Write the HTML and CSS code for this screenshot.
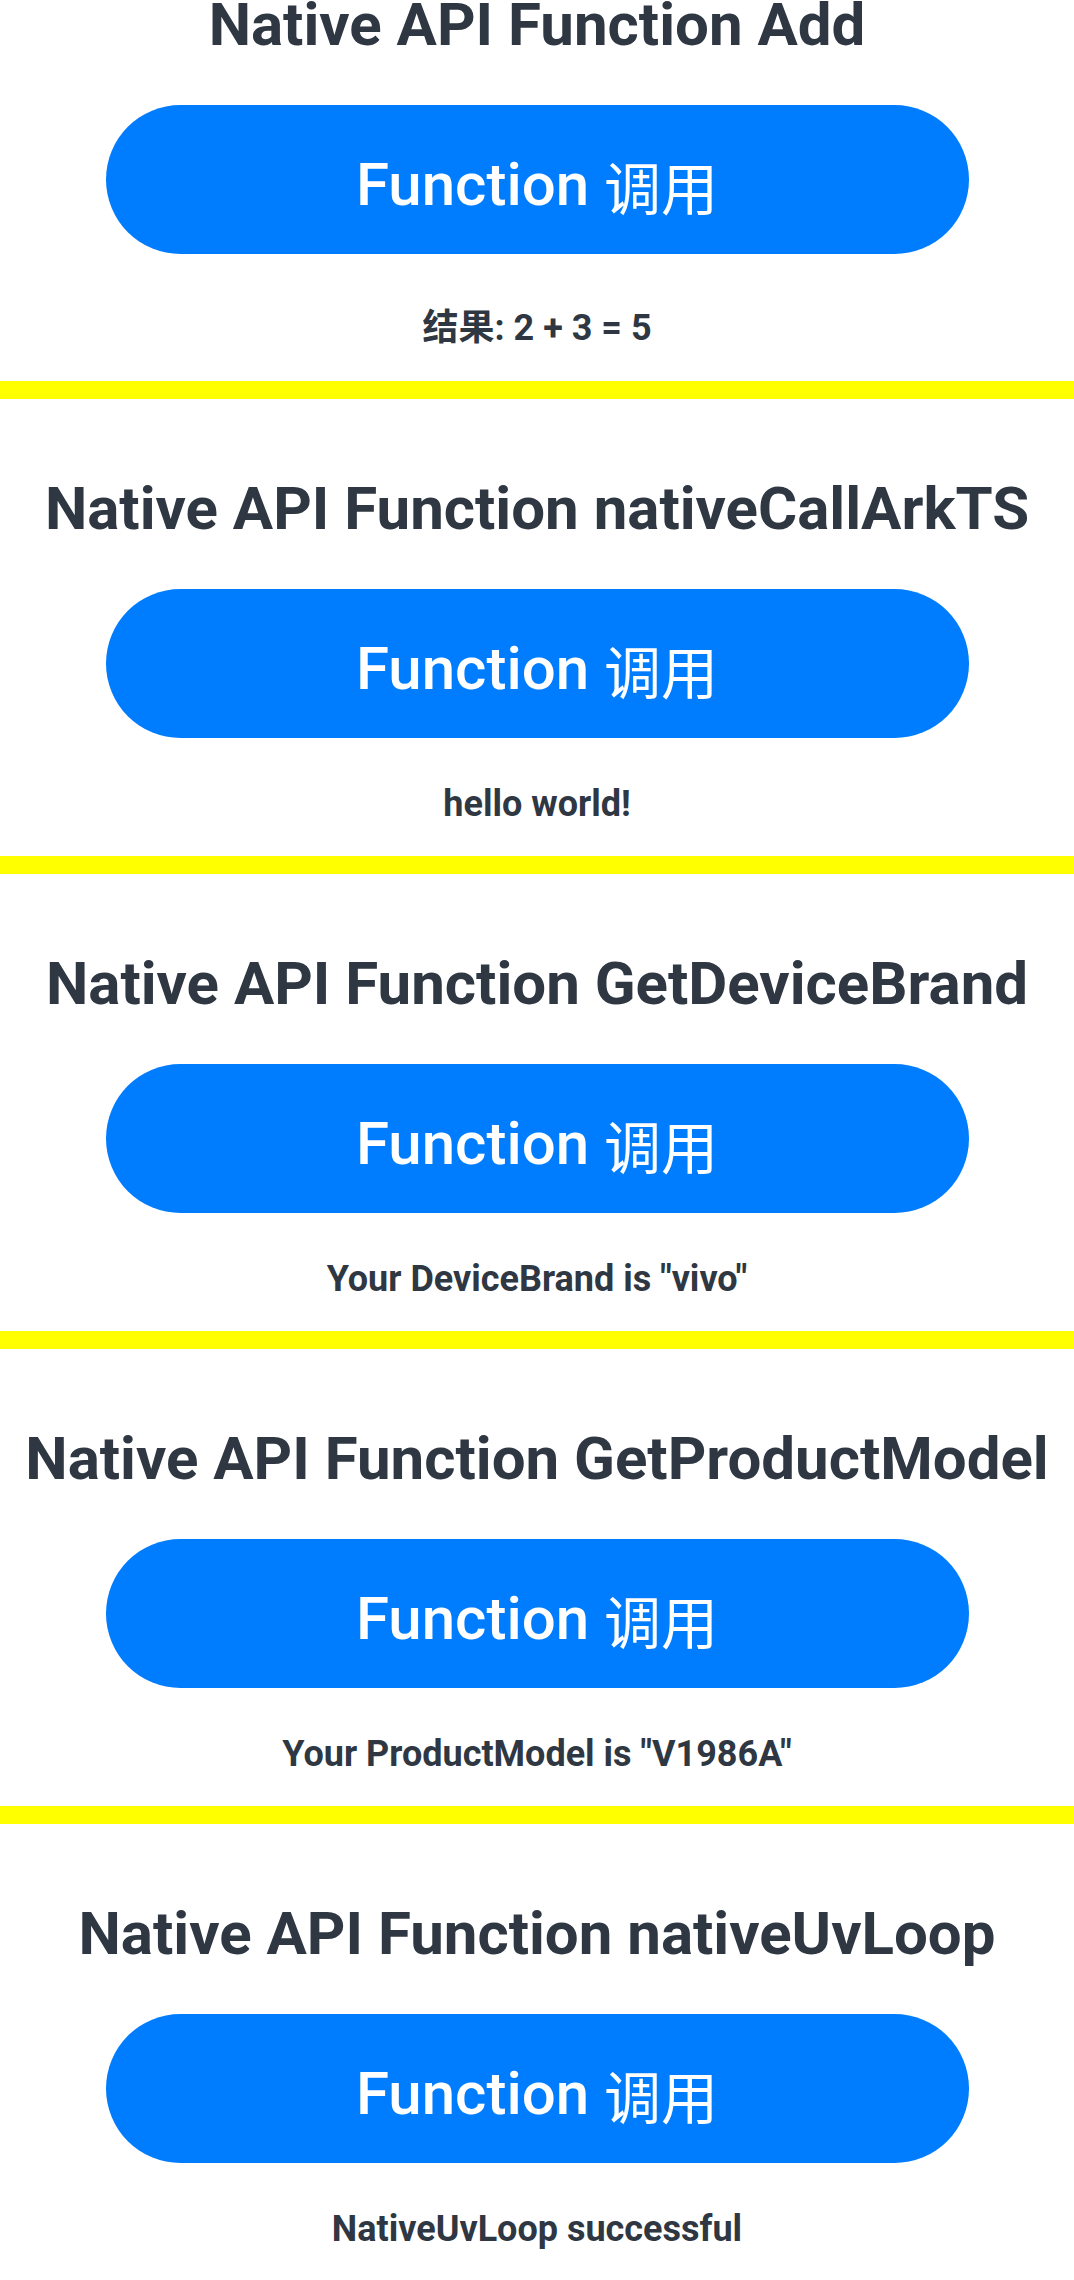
FILE: index.html
```html
<!DOCTYPE html>
<html lang="zh">
<head>
<meta charset="utf-8">
<title>Native API</title>
<link rel="stylesheet" href="styles.css">
</head>
<body>
<main class="list">
  <section class="item">
    <h2 class="title">Native API Function Add</h2>
    <button class="btn">Function <span class="btn-cjk">调用</span></button>
    <p class="result result-cjk">结果: 2 + 3 = 5</p>
  </section>
  <div class="divider"></div>
  <section class="item">
    <h2 class="title">Native API Function nativeCallArkTS</h2>
    <button class="btn">Function <span class="btn-cjk">调用</span></button>
    <p class="result">hello world!</p>
  </section>
  <div class="divider"></div>
  <section class="item">
    <h2 class="title">Native API Function GetDeviceBrand</h2>
    <button class="btn">Function <span class="btn-cjk">调用</span></button>
    <p class="result">Your DeviceBrand is "vivo"</p>
  </section>
  <div class="divider"></div>
  <section class="item">
    <h2 class="title">Native API Function GetProductModel</h2>
    <button class="btn">Function <span class="btn-cjk">调用</span></button>
    <p class="result">Your ProductModel is "V1986A"</p>
  </section>
  <div class="divider"></div>
  <section class="item">
    <h2 class="title">Native API Function nativeUvLoop</h2>
    <button class="btn">Function <span class="btn-cjk">调用</span></button>
    <p class="result">NativeUvLoop successful</p>
  </section>
</main>
</body>
</html>
```

FILE: styles.css
```css
html, body {
  margin: 0;
  padding: 0;
  background: #ffffff;
}
body {
  font-family: Roboto, "Noto Sans CJK SC", sans-serif;
  color: #2e3742;
  overflow: hidden;
  height: 2280px;
}
.list {
  display: flex;
  flex-direction: column;
  margin-top: -85px;
}
.item {
  display: flex;
  flex-direction: column;
  align-items: center;
  padding: 70px 0 32px;
}
.title {
  margin: 0;
  font-size: 60px;
  line-height: 80px;
  font-weight: 700;
  white-space: nowrap;
  color: #2e3742;
}
.btn {
  margin-top: 40px;
  width: 863px;
  height: 149px;
  border: none;
  border-radius: 75px;
  background: #007dff;
  color: #ffffff;
  font-family: Roboto, "Noto Sans CJK SC", sans-serif;
  font-size: 60px;
  line-height: 70px;
  font-weight: 500;
  padding: 10px 0 0;
  display: flex;
  align-items: center;
  justify-content: center;
  white-space: pre;
}
.btn-cjk {
  font-family: "Noto Sans CJK SC", sans-serif;
  font-weight: 400;
  font-size: 57px;
}
.result {
  margin: 46px 0 0;
  font-size: 36px;
  line-height: 40px;
  font-weight: 700;
  color: #2e3742;
}
.result-cjk {
  padding-top: 8px;
  line-height: 41px;
}
.divider {
  height: 18px;
  background: #ffff00;
}
```
